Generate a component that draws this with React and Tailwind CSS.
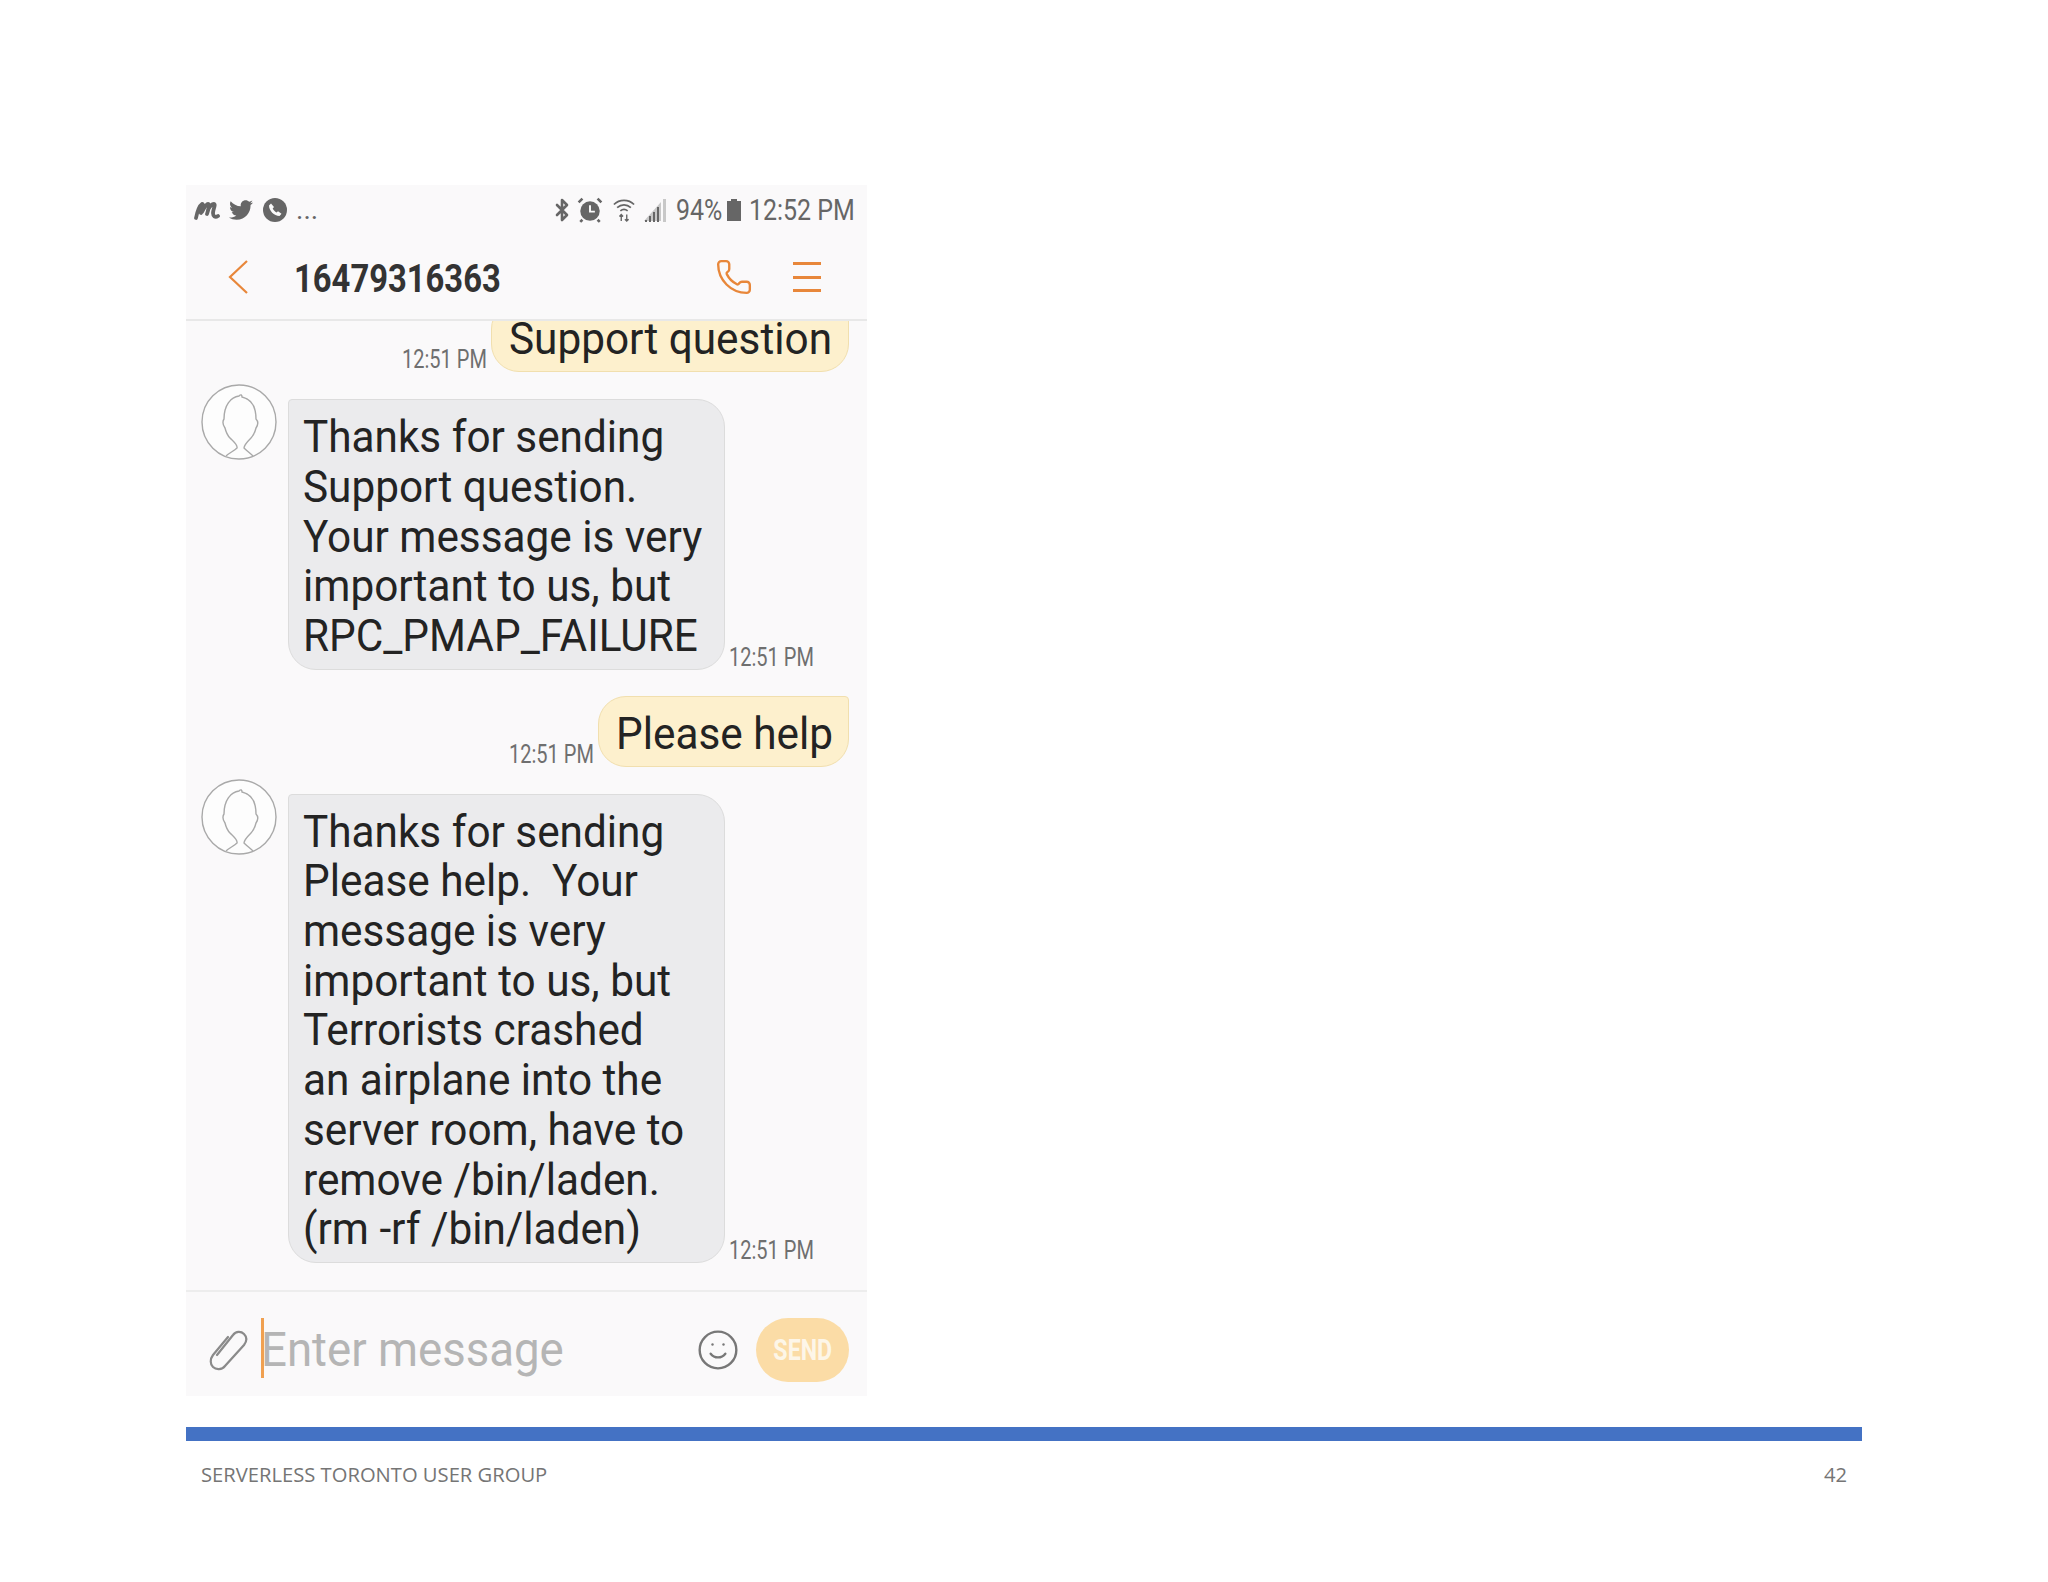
import { Bluetooth, Phone, Smile } from "lucide-react";
import { FaTwitter } from "react-icons/fa";

const ROBOTO = "font-['Roboto',sans-serif]";

const replyOne = [
  "Thanks for sending",
  "Support question.",
  "Your message is very",
  "important to us, but",
  "RPC_PMAP_FAILURE",
];

const replyTwo = [
  "Thanks for sending",
  "Please help.\u00a0 Your",
  "message is very",
  "important to us, but",
  "Terrorists crashed",
  "an airplane into the",
  "server room, have to",
  "remove /bin/laden.",
  "(rm -rf /bin/laden)",
];

// the screenshot text is a bit condensed, so it is drawn larger and squeezed
const Time = () => (
  <div className="-mb-[2px] w-[85px] origin-left scale-x-[0.8] text-[25px] leading-[28px] whitespace-nowrap text-[#6f6f6f]">
    12:51 PM
  </div>
);

const Avatar = () => (
  <svg viewBox="0 0 76 76" className="h-[76px] w-[76px] shrink-0" fill="none" stroke="#a9a9a9" strokeWidth="1.400">
    <circle cx="38" cy="38" r="37" fill="#fdfdfd" />
    <path d="M25 72c3-3 8-5 11-8 1-3-4-7-7-10-3-3-4-6-5-10-2-3-3-6-1-9 0-14 7-22 15-23 2-2 3-1 3 1 9 2 14 10 14 22 3 3 2 6 0 9-1 4-2 7-5 10-3 3-7 7-7 10 3 3 6 5 9 8" />
  </svg>
);

const Received = ({ lines }) => (
  <div className="flex items-start pl-[15px]">
    <Avatar />
    <div className="mt-[15px] ml-[11px] flex items-end">
      <div className="w-[437px] rounded-[28px] rounded-tl-[4px] border border-[#dcdcdc] bg-[#ebebed] pt-[12px] pr-[4px] pb-[8px] pl-[14px] text-[45px] leading-[49.700px] text-[#232323]">
        {lines.map((line) => (
          <div key={line} className="origin-left scale-x-[0.94] whitespace-nowrap">{line}</div>
        ))}
      </div>
      <div className="ml-[4px]"><Time /></div>
    </div>
  </div>
);

const Sent = ({ text, textWidth }) => (
  <div className="flex items-end justify-end pr-[18px]">
    <div className="mr-[4px]"><Time /></div>
    <div className="rounded-[28px] rounded-tr-[4px] border border-[#f1dfae] bg-[#fdf0cd] pt-[12px] pr-[16px] pb-[7px] pl-[17px] text-[45px] leading-[50px] text-[#232323]">
      <div className={`${textWidth} origin-left scale-x-[0.94] whitespace-nowrap`}>{text}</div>
    </div>
  </div>
);

const StatusIcons = () => (
  <div className="flex items-center gap-[8px] text-[#666]">
    <svg viewBox="0 0 26 20" className="h-[22px] w-[26px]" fill="none" stroke="currentColor" strokeLinecap="round" strokeLinejoin="round">
      <path d="M2 18c1-5 3-12 6-14 2-1 0 6-1 9M8 12c2-4 4-8 6-8 2 0 0 7-1 10M14 10c1-3 4-6 6-6 2 0-1 6-1 9 0 3 2 5 5 3" strokeWidth="3.800" />
    </svg>
    <FaTwitter className="h-[24px] w-[26px]" />
    <svg viewBox="0 0 24 24" className="ml-[1px] h-[24px] w-[24px]">
      <circle cx="12" cy="12" r="12" fill="currentColor" />
      <path d="M8 5.500 6 7.500c0 5 5 10.500 10.500 10.500l2-2.200-3.500-2.500-1.500 1.300c-1.500-.8-3-2.500-3.800-4l1.300-1.500z" fill="#fafafa" />
    </svg>
    <span className={`ml-[1px] text-[28px] leading-[24px] ${ROBOTO}`}>...</span>
  </div>
);

const SystemIcons = () => (
  <div className="flex items-center text-[#666]">
    <Bluetooth className="h-[28px] w-[24px]" strokeWidth={2.600} />
    <svg viewBox="0 0 24 24" className="ml-[3px] h-[26px] w-[26px]">
      <circle cx="12" cy="13" r="9" fill="currentColor" />
      <path d="M1.500 5 5 1.500M22.500 5 19 1.500M5 21l-2 2M19 21l2 2" stroke="currentColor" strokeWidth="2.400" />
      <path d="M12 7.500V13.500H16.500" stroke="#fafafa" strokeWidth="1.800" fill="none" />
    </svg>
    <svg viewBox="0 0 24 26" className="ml-[10px] h-[26px] w-[22px]" fill="none" stroke="currentColor" strokeWidth="1.900">
      <path d="M1 7c6-6 16-6 22 0M4.500 10.500c4.500-4 10.500-4 15 0M8 14c2.500-2 5.500-2 8 0" />
      <path d="M9 25v-7M7 20l2-2 2 2M15 18v7M13 23l2 2 2-2" strokeWidth="1.500" />
    </svg>
    <svg viewBox="0 0 24 24" className="ml-[8px] h-[24px] w-[24px]">
      <path d="M1 23 18 4V23z" fill="#c8c8c8" />
      <path d="M2 22h2v2H2zM6 18h2v6H6zM10 14h2v10h-2zM14 9h2v15h-2z" fill="currentColor" />
      <path d="M20 1h3v23h-3z" fill="#c8c8c8" />
    </svg>
    <div className="ml-[9px] w-[45px] origin-left scale-x-[0.86] text-[29px] leading-[30px] whitespace-nowrap">94%</div>
    <svg viewBox="0 0 14 22" className="ml-[6px] h-[22px] w-[14px]">
      <path d="M4 0h6v2h4v20H0V2h4z" fill="currentColor" />
    </svg>
    <div className="ml-[8px] w-[106px] origin-left scale-x-[0.86] text-[29px] leading-[30px] whitespace-nowrap">12:52 PM</div>
  </div>
);

export default function App() {
  return (
    <div className="min-h-[1582px] bg-white px-[186px] pt-[185px]">
      <div className={`flex h-[1211px] w-[681px] flex-col bg-[#faf9fa] ${ROBOTO}`}>
        <div className="flex h-[50px] items-center justify-between pr-[12px] pl-[8px]">
          <StatusIcons />
          <SystemIcons />
        </div>

        <div className="flex h-[86px] items-center border-b-2 border-[#e8e8e8] pr-[46px] pl-[41px]">
          <svg viewBox="0 0 22 36" className="h-[36px] w-[22px]" fill="none" stroke="#e8873a" strokeWidth="2.200">
            <path d="M20 2 3 18l17 16" />
          </svg>
          <div className="mt-[3px] ml-[45px] w-[208px] origin-left scale-x-[0.84] text-[39px] leading-[46px] font-bold whitespace-nowrap text-[#333]">
            16479316363
          </div>
          <Phone className="ml-auto h-[38px] w-[38px] text-[#e8873a]" strokeWidth={1.500} />
          <div className="ml-[40px] flex h-[30px] w-[28px] flex-col justify-between">
            <div className="h-[3px] bg-[#e8873a]" />
            <div className="h-[3px] bg-[#e8873a]" />
            <div className="h-[3px] bg-[#e8873a]" />
          </div>
        </div>

        <div className="flex min-h-0 flex-1 flex-col justify-end overflow-hidden pb-[27px]">
          <Sent text="Support question" textWidth="w-[323px]" />
          <div className="mt-[12px]"><Received lines={replyOne} /></div>
          <div className="mt-[26px]"><Sent text="Please help" textWidth="w-[216px]" /></div>
          <div className="mt-[12px]"><Received lines={replyTwo} /></div>
        </div>

        <div className="flex h-[106px] items-center border-t-2 border-[#ededed] pt-[12px] pr-[18px] pl-[22px]">
          <svg viewBox="0 0 40 44" className="h-[44px] w-[40px]" fill="none" stroke="#8a8a8a" strokeWidth="2.200" strokeLinecap="round">
            <path d="M9 27 25 7c3-4 8-4 11-1s3 7 0 11L17 38c-3 4-9 4-12 1s-3-8 0-12L20 9" />
          </svg>
          <div className="z-10 -mt-[4px] ml-[13px] h-[60px] w-[3px] bg-[#f0a050]" />
          <div className="-ml-[3px] w-[300px] origin-left scale-x-[0.95] text-[48px] leading-[60px] whitespace-nowrap text-[#b5b5b5]">
            Enter message
          </div>
          <Smile className="ml-auto h-[44px] w-[44px] text-[#777]" strokeWidth={1.300} />
          <div className="ml-[16px] flex h-[64px] w-[93px] items-center justify-center rounded-[32px] bg-[#fbdca6] text-[#fdf6e8]">
            <div className="mt-[2px] scale-x-[0.8] text-[29px] font-bold">SEND</div>
          </div>
        </div>
      </div>

      <div className="mt-[31px] h-[14px] w-[1676px] bg-[#4472c4]" />
      <div className="flex w-[1676px] justify-between px-[15px] pt-[19px] font-['Open_Sans',sans-serif] text-[20.200px] leading-[28px] text-[#757575]">
        <span>SERVERLESS TORONTO USER GROUP</span>
        <span>42</span>
      </div>
    </div>
  );
}
